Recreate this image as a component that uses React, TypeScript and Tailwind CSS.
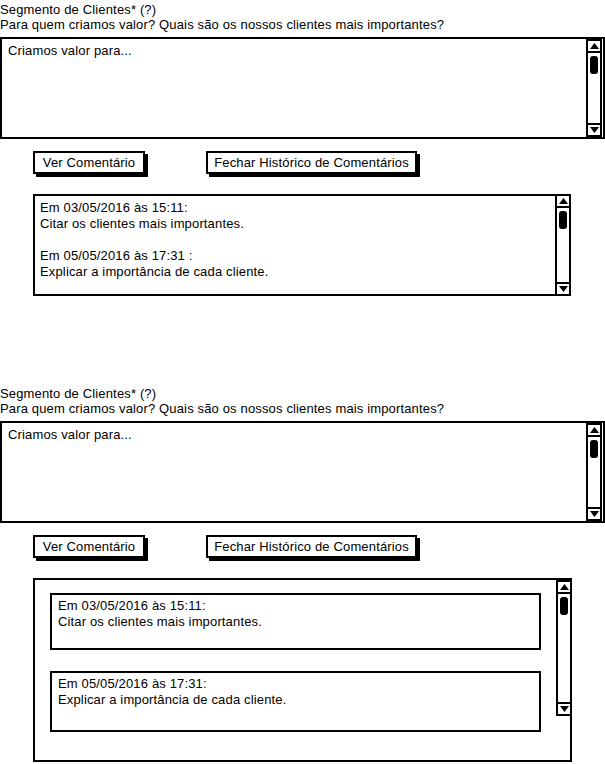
import React from "react";

const font = { fontFamily: '"Liberation Sans", Arial, sans-serif', letterSpacing: "0.15px" };

function Scrollbar({ className = "" }: { className?: string }) {
  return (
    <div className={"flex w-[16px] flex-col border-2 border-black bg-white " + className}>
      <div className="flex h-[12px] items-center justify-center border-b-2 border-black">
        <svg width="9" height="6" viewBox="0 0 9 6">
          <polygon points="0,6 4.5,0 9,6" fill="#000" />
        </svg>
      </div>
      <div className="mx-auto mt-[3px] h-[18px] w-[8px] rounded-[3px] bg-black" />
      <div className="flex-1" />
      <div className="flex h-[12px] items-center justify-center border-t-2 border-black">
        <svg width="9" height="6" viewBox="0 0 9 6">
          <polygon points="0,0 4.5,6 9,0" fill="#000" />
        </svg>
      </div>
    </div>
  );
}

function Header() {
  return (
    <div className="text-[13px] leading-[15px] text-black">
      <div>Segmento de Clientes* (?)</div>
      <div>Para quem criamos valor? Quais são os nossos clientes mais importantes?</div>
    </div>
  );
}

function TextArea() {
  return (
    <div className="mt-[5px] flex h-[102px] w-[605px] border-2 border-black bg-white">
      <div className="flex-1 px-[6px] pt-[4px] text-[13px] leading-[15px]">Criamos valor para...</div>
      <Scrollbar className="mr-[1px]" />
    </div>
  );
}

function Buttons() {
  return (
    <div className="mt-[12px] flex pl-[33px]">
      <div className="flex h-[23px] w-[112px] items-center justify-center border-2 border-black bg-white text-[13px] shadow-[3px_3px_0_#000]">
        Ver Comentário
      </div>
      <div className="ml-[61px] flex h-[23px] w-[211px] items-center justify-center border-2 border-black bg-white text-[13px] shadow-[3px_3px_0_#000]">
        Fechar Histórico de Comentários
      </div>
    </div>
  );
}

export default function App() {
  return (
    <div className="w-[605px] bg-white text-black" style={font}>
      {/* Section 1 */}
      <div className="pt-[2px]">
        <Header />
        <TextArea />
        <Buttons />
        <div className="ml-[33px] mt-[20px] flex h-[102px] w-[538px] border-2 border-black bg-white">
          <div className="flex-1 px-[5px] pt-[4px] text-[13px] leading-[16px]">
            <div>Em 03/05/2016 às 15:11:</div>
            <div>Citar os clientes mais importantes.</div>
            <div className="h-[16px]" />
            <div>Em 05/05/2016 às 17:31 :</div>
            <div>Explicar a importância de cada cliente.</div>
          </div>
          <Scrollbar className="-mr-[2px] -my-[2px]" />
        </div>
      </div>

      {/* Section 2 */}
      <div className="mt-[88px] pt-[2px]">
        <Header />
        <TextArea />
        <Buttons />
        <div className="ml-[33px] mt-[20px] flex h-[184px] w-[539px] border-2 border-black bg-white">
          <div className="flex flex-1 flex-col gap-[21px] pl-[15px] pr-[15px] pt-[13px] text-[13px] leading-[16px]">
            <div className="h-[57px] border-2 border-black px-[6px] pt-[3px]">
              <div>Em 03/05/2016 às 15:11:</div>
              <div>Citar os clientes mais importantes.</div>
            </div>
            <div className="h-[61px] border-2 border-black px-[6px] pt-[3px]">
              <div>Em 05/05/2016 às 17:31:</div>
              <div>Explicar a importância de cada cliente.</div>
            </div>
          </div>
          <div className="-mr-[2px] flex h-[136px] flex-col">
            <Scrollbar className="h-full" />
          </div>
        </div>
      </div>
    </div>
  );
}
